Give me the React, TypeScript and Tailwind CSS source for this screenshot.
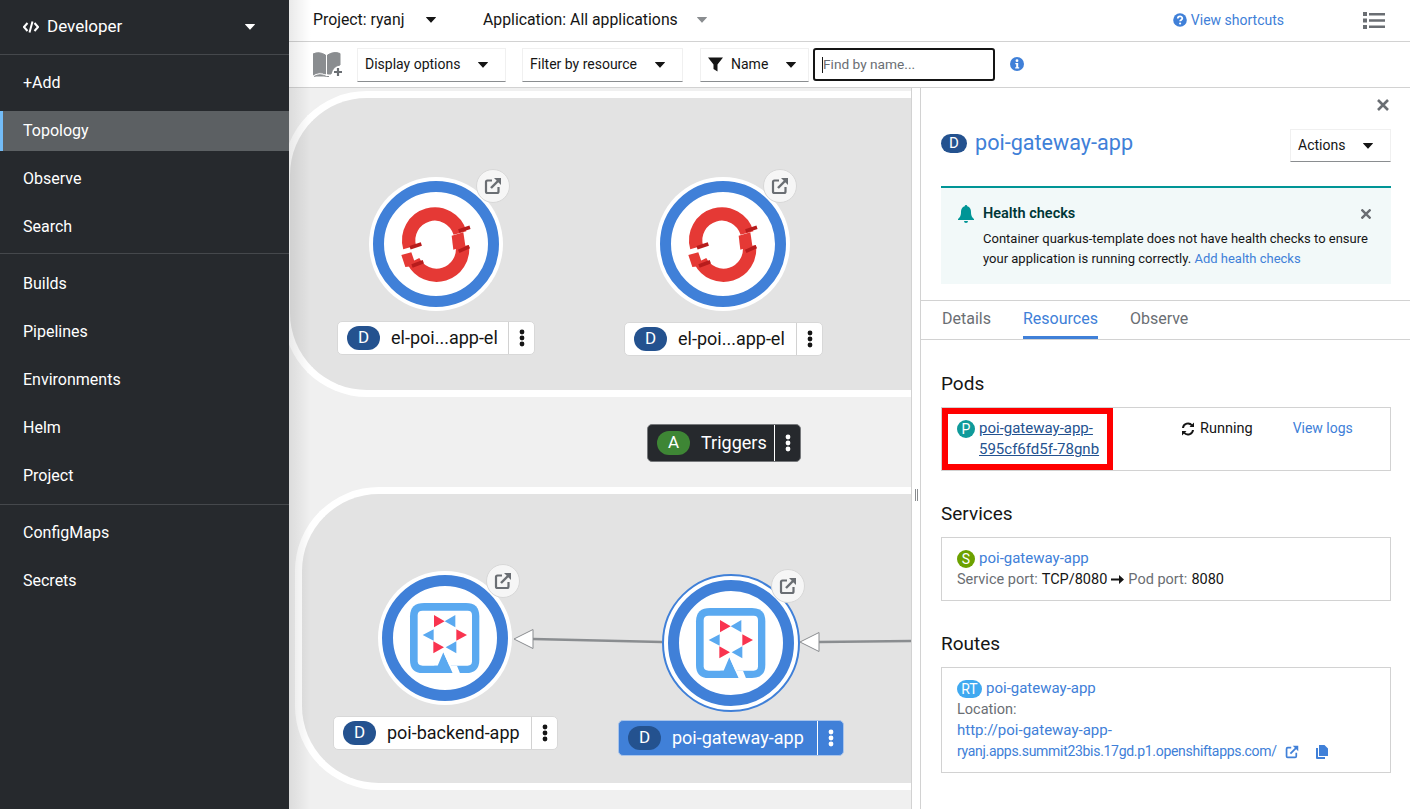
function Caret({ className = 'text-[#151515]' }: { className?: string }) {
  return (
    <svg className={className} width="10" height="6" viewBox="0 0 10 6">
      <path d="M0.3 0h9.4a.3.3 0 0 1 .2.5L5.3 5.6a.4.4 0 0 1-.6 0L.1.5A.3.3 0 0 1 .3 0z" fill="currentColor" />
    </svg>
  )
}

function ExternalIcon({ className, size = 18 }: { className?: string; size?: number }) {
  return (
    <svg className={className} width={size} height={size} viewBox="0 0 18 18" fill="none" stroke="currentColor">
      <path d="M8 3.5H3.5a1.5 1.5 0 0 0-1.5 1.5v9.5A1.5 1.5 0 0 0 3.5 16H13a1.5 1.5 0 0 0 1.5-1.5V10" strokeWidth="2.2" />
      <path d="M7 11L15 3" strokeWidth="2.4" />
      <path d="M10 1h7v7z" fill="currentColor" stroke="none" />
    </svg>
  )
}

function Kebab() {
  return (
    <svg width="6" height="18" viewBox="0 0 6 18" fill="currentColor">
      <circle cx="3" cy="3" r="2.4" />
      <circle cx="3" cy="9" r="2.4" />
      <circle cx="3" cy="15" r="2.4" />
    </svg>
  )
}

function Decorator({ x, y }: { x: number; y: number }) {
  return (
    <div
      className="absolute flex h-[34px] w-[34px] items-center justify-center rounded-full border border-[#d8d8d8] bg-[#f6f6f6] text-[#6a6e73]"
      style={{ left: x - 17, top: y - 17 }}
    >
      <ExternalIcon />
    </div>
  )
}

function OpenshiftLogo() {
  return (
    <svg className="absolute inset-0" width="134" height="134" viewBox="-201 -201 402 402">
      <g transform="translate(0 3)" fill="none">
        <path d="M-79 7A78 78 0 0 1 72 -36" stroke="#e53935" strokeWidth="40" />
        <path d="M79 3A78 78 0 0 1 -68 48" stroke="#e53935" strokeWidth="40" />
        <path d="M-104 30L-74 22L-60 62L-92 66z" fill="#e53935" />
        <path d="M47 -28L82 -38L88 2L52 14z" fill="#e53935" />
        <path d="M-78 8L-44 -3M68 -42L102 -53M68 19L100 5M-72 63L-38 50" stroke="#b71c1c" strokeWidth="11" />
      </g>
    </svg>
  )
}

function QuarkusLogo() {
  return (
    <svg className="absolute inset-0" width="134" height="134" viewBox="-201 -201 402 402">
      <g transform="translate(-377 -262)">
        <path
          d="M315 157H440Q480 157 480 197V327Q480 367 440 367H310Q272 367 272 327V197Q272 157 315 157z"
          fill="#5aa9f0"
        />
        <path d="M310 180H445Q458 180 458 193V332Q458 345 445 345H310Q295 345 295 332V193Q295 180 310 180z" fill="#fff" />
        <path d="M372 305L355 345H345V367H400z" fill="#5aa9f0" />
        <path d="M372 305L400 368H422L413 345H395L380 305z" fill="#fff" />
        <path d="M344 193V230L376 212zM342 272V308L374 290zM443 253L411 236V270z" fill="#f9344f" />
        <path d="M408 193V230L376 212zM310 253L343 236V270zM411 272V308L379 290z" fill="#5aa9f0" />
      </g>
    </svg>
  )
}

function NodeCircle({ cx, cy, selected, logo }: { cx: number; cy: number; selected?: boolean; logo: 'os' | 'q' }) {
  return (
    <div className="absolute h-[134px] w-[134px]" style={{ left: cx - 67, top: cy - 67 }}>
      {selected ? (
        <div className="absolute -inset-[2px] rounded-full border-2 border-[#4080d8] bg-white" />
      ) : (
        <div className="absolute inset-0 rounded-full bg-white" />
      )}
      <div className="absolute inset-[4px] rounded-full border-[11px] border-[#4080d8] bg-white" />
      {logo === 'os' ? <OpenshiftLogo /> : <QuarkusLogo />}
    </div>
  )
}

function NodeLabel({
  x,
  y,
  w,
  h = 34,
  text,
  badge = 'D',
  variant = 'light',
}: {
  x: number
  y: number
  w: number
  h?: number
  text: string
  badge?: string
  variant?: 'light' | 'blue' | 'dark'
}) {
  const shell =
    variant === 'blue'
      ? 'bg-[#4080d8] text-white border-[#a9c4ea]'
      : variant === 'dark'
        ? 'bg-[#26292d] text-white border-[#77797c]'
        : 'bg-white text-[#151515] border-[#d8d8d8]'
  const divider = variant === 'light' ? 'border-[#d2d2d2]' : 'border-white'
  const badgeBg = badge === 'A' ? 'bg-[#3e8635]' : 'bg-[#24528f]'
  return (
    <div className={`absolute flex items-stretch rounded-[5px] border ${shell}`} style={{ left: x, top: y, width: w, height: h }}>
      <div className="flex min-w-0 flex-1 items-center pl-[9px]">
        <span className={`flex h-[24px] w-[33px] shrink-0 items-center justify-center rounded-full text-[17px] text-white ${badgeBg}`}>{badge}</span>
        <span className="mb-[2px] ml-[11px] whitespace-nowrap text-[18px]">{text}</span>
      </div>
      <div className={`flex w-[26px] shrink-0 items-center justify-center border-l ${divider}`}>
        <Kebab />
      </div>
    </div>
  )
}

function Group({ x, y, h, w }: { x: number; y: number; h: number; w: number }) {
  return (
    <div
      className="absolute rounded-l-[84px] border-y-[7px] border-l-[7px] border-white bg-[#e3e3e3]"
      style={{ left: x, top: y, height: h, width: w }}
    />
  )
}

// page coordinates, the arrow head sits on the (x1, y1) end
function Edge({ x1, y1, x2, y2 }: { x1: number; y1: number; x2: number; y2: number }) {
  const ax = x1 - 289
  const ay = y1 - 87
  return (
    <svg className="absolute left-0 top-0" width="623" height="722">
      <line x1={ax + 19} y1={ay} x2={x2 - 289} y2={y2 - 87} stroke="#8a8d90" strokeWidth="2.5" />
      <path d={`M${ax} ${ay}L${ax + 19} ${ay - 9.5}V${ay + 9.5}z`} fill="#fff" stroke="#8a8d90" strokeWidth="1" />
    </svg>
  )
}

function Canvas() {
  return (
    <div className="relative h-full w-[622px] shrink-0 overflow-hidden bg-[#f0f0f0]">
      <Group x={-6} y={3} h={306} w={640} />
      <Group x={6} y={399} h={303} w={640} />
      <Edge x1={514} y1={638} x2={662} y2={641} />
      <Edge x1={800} y1={641} x2={911} y2={640} />
      <NodeCircle cx={147} cy={156} logo="os" />
      <Decorator x={204} y={98} />
      <NodeLabel x={48} y={233} w={198} text="el-poi...app-el" />
      <NodeCircle cx={434} cy={156} logo="os" />
      <Decorator x={491} y={98} />
      <NodeLabel x={335} y={234} w={199} text="el-poi...app-el" />
      <NodeLabel x={358} y={336} w={154} h={38} text="Triggers" badge="A" variant="dark" />
      <NodeCircle cx={156} cy={550} logo="q" />
      <Decorator x={214} y={493} />
      <NodeLabel x={44} y={628} w={225} text="poi-backend-app" />
      <NodeCircle cx={442} cy={555} logo="q" selected />
      <Decorator x={499} y={498} />
      <NodeLabel x={329} y={632} w={226} h={36} text="poi-gateway-app" variant="blue" />
    </div>
  )
}

const navGroups = [
  ['+Add', 'Topology', 'Observe', 'Search'],
  ['Builds', 'Pipelines', 'Environments', 'Helm', 'Project'],
  ['ConfigMaps', 'Secrets'],
]

function Sidebar() {
  return (
    <aside className="z-10 flex h-full w-[289px] shrink-0 flex-col bg-[#26292d] text-white">
      <div className="flex h-[55px] shrink-0 items-center justify-between border-b border-[#45484c] pl-[23px] pr-[34px]">
        <div className="flex items-center gap-[8px] text-[17px]">
          <svg width="16" height="12" viewBox="0 0 16 12" fill="none" stroke="currentColor" strokeWidth="2">
            <path d="M4.5 2L1 6l3.5 4M11.500 2L15 6l-3.500 4M9.500 0.500L6.500 11.500" />
          </svg>
          Developer
        </div>
        <Caret className="text-white" />
      </div>
      {navGroups.map((group, i) => (
        <div
          key={i}
          className={`flex flex-col gap-[8px] ${i === 0 ? 'py-[7px]' : i === 1 ? 'py-[9px]' : 'pt-[7px]'} ${i < 2 ? 'border-b border-[#45484c]' : ''}`}
        >
          {group.map(item => (
            <div
              key={item}
              className={
                item === 'Topology'
                  ? 'relative top-px flex h-[40px] items-center border-l-[3px] border-[#73bcf7] bg-[#5c6063] pl-[20px] text-[16px]'
                  : 'flex h-[40px] items-center pl-[23px] pt-[2px] text-[16px]'
              }
            >
              {item}
            </div>
          ))}
        </div>
      ))}
    </aside>
  )
}

function TopBar() {
  return (
    <div className="flex h-[42px] shrink-0 items-center border-b border-[#d2d2d2] pb-[1px] pl-[24px] pr-[25px] text-[15.8px] text-[#151515]">
      <span className="w-[113px]">Project: ryanj</span>
      <Caret className="text-[#151515]" />
      <span className="ml-[47px] w-[214px]">Application: All applications</span>
      <Caret className="text-[#8a8d90]" />
      <div className="ml-auto flex items-center gap-[4px] text-[14px] text-[#4080d8]">
        <svg width="14" height="14" viewBox="0 0 14 14">
          <circle cx="7" cy="7" r="6.800" fill="#4080d8" />
          <path d="M4.800 5.500C4.800 2.800 9.300 2.800 9.300 5.300C9.300 6.900 7.100 6.900 7.100 8.300" fill="none" stroke="#fff" strokeWidth="1.800" />
          <circle cx="7.100" cy="10.500" r="1.100" fill="#fff" />
        </svg>
        View shortcuts
      </div>
      <svg className="ml-[79px]" width="22" height="17" viewBox="0 0 22 17" fill="#6a6e73">
        <path d="M0 0h4v4H0zM0 6.500h4v4H0zM0 13h4v4H0zM6 1h16v2.500H6zM6 7.300h16v2.500H6zM6 13.600h16v2.500H6z" />
      </svg>
    </div>
  )
}

function Select({ label, w }: { label: string; w: number }) {
  return (
    <div
      className="flex h-[34px] items-center justify-between border border-[#f0f0f0] border-b-[#8a8d90] pl-[7px] pr-[17px] text-[14px] text-[#151515]"
      style={{ width: w }}
    >
      {label}
      <Caret />
    </div>
  )
}

function ToolBar() {
  return (
    <div className="flex h-[46px] shrink-0 items-center border-b border-[#d2d2d2] pl-[24px] text-[#151515]">
      <svg width="29" height="26" viewBox="0 0 29 26">
        <path d="M0 2Q6 -1 12.500 3V22Q6 19 0 23zM14.500 3Q21 -1 27 1.500V13Q20 14 18 22L14.500 22zM1 24.500Q7 21 13.500 24.500L16 24.500" fill="#8a8d90" stroke="#8a8d90" strokeWidth="1" />
        <path d="M21 20h8M25 16v8" stroke="#6a6e73" strokeWidth="2.200" />
      </svg>
      <div className="ml-[15px]"><Select label="Display options" w={149} /></div>
      <div className="ml-[16px]"><Select label="Filter by resource" w={161} /></div>
      <div className="ml-[17px] flex h-[34px] w-[109px] items-center border border-[#f0f0f0] border-b-[#8a8d90] pl-[7px] text-[14px]">
        <svg width="15" height="15" viewBox="0 0 15 15" fill="#151515">
          <path d="M0 .500h15L9.500 7.500V14.500L5.500 12V7.500z" />
        </svg>
        <span className="ml-[8px]">Name</span>
        <Caret className="ml-[18px] text-[#151515]" />
      </div>
      <div className="ml-[4px] flex h-[33px] w-[182px] items-center rounded-[3px] border-2 border-[#151515] pl-[7px] text-[13.7px] text-[#6a6e73]">
        <span className="h-[16px] w-px bg-[#151515]" />Find by name...
      </div>
      <svg className="-mt-[2px] ml-[15px]" width="14" height="14" viewBox="0 0 14 14">
        <circle cx="7" cy="7" r="7" fill="#4080d8" />
        <circle cx="7" cy="3.700" r="1.400" fill="#fff" />
        <path d="M5.300 6h2.900v4.200h1v1.200H5.200v-1.200h1V7.200h-.9z" fill="#fff" />
      </svg>
    </div>
  )
}

function Resource({ title, children, h, mt }: { title: string; children: React.ReactNode; h: number; mt: number }) {
  return (
    <section style={{ marginTop: mt }}>
      <h2 className="text-[19px] leading-[24px] text-[#151515]">{title}</h2>
      <div className="mt-[11px] border border-[#d2d2d2] text-[15px] leading-[21px]" style={{ height: h }}>
        {children}
      </div>
    </section>
  )
}

function Dot({ label, color, w = 'w-[18px]' }: { label: string; color: string; w?: string }) {
  return <span className={`mr-[4px] flex h-[18px] shrink-0 items-center justify-center rounded-full text-[14px] leading-none text-white ${w} ${color}`}>{label}</span>
}

function SidePanel() {
  return (
    <div className="flex min-w-0 flex-1 flex-col border-l border-[#d2d2d2] bg-white">
      <div className="flex justify-end pr-[21px] pt-[11px] text-[#6a6e73]">
        <svg width="12" height="12" viewBox="0 0 12 12" stroke="currentColor" strokeWidth="2.600">
          <path d="M1 1l10 10M11 1L1 11" />
        </svg>
      </div>
      <div className="mt-[18px] flex items-start justify-between pl-[20px] pr-[19px]">
        <div className="mt-[1px] flex items-center text-[21.6px] leading-[26px] text-[#4080d8]">
          <span className="mr-[8px] flex h-[19px] w-[26px] items-center justify-center rounded-full bg-[#24528f] text-[15px] text-white">D</span>
          poi-gateway-app
        </div>
        <div className="flex h-[33px] w-[101px] items-center justify-between border border-[#f0f0f0] border-b-[#8a8d90] pl-[7px] pr-[17px] text-[14px] text-[#151515]">
          Actions
          <Caret />
        </div>
      </div>
      <div className="ml-[20px] mr-[19px] mt-[24px] h-[98px] border-t-2 border-[#009596] bg-[#f2f9f9] pl-[17px] pr-[10px] pt-[17px]">
        <div className="flex items-center pr-[10px]">
          <svg width="16" height="18" viewBox="0 0 16 18" fill="#009596">
            <path d="M8 0a1.300 1.300 0 0 1 1.300 1.300C12 2 13 4.500 13 7c0 4 1.300 5.500 3 7v1H0v-1c1.700-1.500 3-3 3-7 0-2.500 1-5 3.700-5.700A1.300 1.300 0 0 1 8 0zM6 16h4a2 2 0 0 1-4 0z" />
          </svg>
          <span className="ml-[9px] text-[14.5px] font-semibold leading-[18px] text-[#003737]">Health checks</span>
          <svg className="ml-auto" width="10" height="10" viewBox="0 0 10 10" stroke="#6a6e73" strokeWidth="2.400">
            <path d="M0.500 0.500l9 9M9.500 0.500l-9 9" />
          </svg>
        </div>
        <p className="ml-[25px] mt-[6px] text-[13px] leading-[20px] text-[#151515]">
          Container quarkus-template does not have health checks to ensure your application is running correctly. <span className="text-[#4080d8]">Add health checks</span>
        </p>
      </div>
      <div className="mt-[16px] flex h-[40px] items-stretch gap-[32px] border-y border-[#d2d2d2] pl-[21px] text-[16px]">
        <div className="flex items-center pb-[2px] text-[#6a6e73]">Details</div>
        <div className="flex items-center border-b-[3px] border-[#4080d8] pt-[1px] text-[#4080d8]">Resources</div>
        <div className="flex items-center pb-[2px] text-[#6a6e73]">Observe</div>
      </div>
      <div className="pl-[20px] pr-[19px]">
        <Resource title="Pods" h={64} mt={32}>
          <div className="relative flex h-full pl-[15px] pt-[10px]">
            <div className="absolute inset-y-0 left-0 w-[171px] border-[6px] border-[#ff0000]" />
            <div className="w-[224px] text-[#24528f]">
              <div className="flex h-[21px] items-center">
                <Dot label="P" color="bg-[#0f9a9a]" />
                <span className="underline">poi-gateway-app-</span>
              </div>
              <div className="ml-[22px] underline">595cf6fd5f-78gnb</div>
            </div>
            <div className="flex h-[21px] items-center gap-[5px] text-[14.5px] text-[#151515]">
              <svg width="14" height="14" viewBox="0 0 14 14" fill="none" stroke="#151515" strokeWidth="2">
                <path d="M2 6A5 5 0 0 1 11 3.500M12 8A5 5 0 0 1 3 10.500" />
                <path d="M13 .500V5H8.500zM1 13.500V9h4.500z" fill="#151515" stroke="none" />
              </svg>
              Running
            </div>
            <div className="ml-[40px] text-[14px] text-[#4080d8]">View logs</div>
          </div>
        </Resource>
        <Resource title="Services" h={64} mt={31}>
          <div className="pl-[15px] pt-[10px]">
            <div className="flex h-[21px] items-center text-[#4080d8]"><Dot label="S" color="bg-[#6ca100]" />poi-gateway-app</div>
            <div className="flex items-center text-[14.5px] text-[#6a6e73]">
              <span>Service port:</span>
              <span className="ml-[4px] text-[#151515]">TCP/8080</span>
              <svg className="mx-[4px]" width="13" height="9" viewBox="0 0 13 9" fill="#151515">
                <path d="M0 3.500h8V0l5 4.500L8 9V5.500H0z" />
              </svg>
              <span>Pod port:</span>
              <span className="ml-[4px] text-[#151515]">8080</span>
            </div>
          </div>
        </Resource>
        <Resource title="Routes" h={106} mt={31}>
          <div className="pl-[15px] pt-[10px]">
            <div className="flex h-[21px] items-center text-[#4080d8]">
              <Dot label="RT" color="bg-[#40a9f0]" w="w-[25px]" />
              poi-gateway-app
            </div>
            <div className="text-[14.5px] text-[#6a6e73]">Location:</div>
            <div className="text-[15px] text-[#4080d8]">http://poi-gateway-app-</div>
            <div className="flex items-center text-[14px] tracking-[-0.3px] text-[#4080d8]">
              ryanj.apps.summit23bis.17gd.p1.openshiftapps.com/
              <ExternalIcon className="ml-[8px]" size={14} />
              <svg className="ml-[17px]" width="12" height="14" viewBox="0 0 12 14" fill="currentColor">
                <path d="M3 0h5.500L12 3.500V11H3zM0 3h2v9h7v2H1a1 1 0 0 1-1-1z" />
              </svg>
            </div>
          </div>
        </Resource>
      </div>
    </div>
  )
}

export default function App() {
  return (
    <div className="flex h-[809px] w-[1410px] overflow-hidden bg-white" style={{ fontFamily: 'Roboto, sans-serif' }}>
      <Sidebar />
      <main className="relative flex min-w-0 flex-1 flex-col">
        <TopBar />
        <ToolBar />
        <div className="flex min-h-0 flex-1">
          <Canvas />
          <div className="relative w-[9px] shrink-0 border-l border-[#d2d2d2] bg-white">
            <div className="absolute left-[3px] top-[401px] h-[12px] w-[3px] border-x border-[#8a8d90]" />
          </div>
          <SidePanel />
        </div>
        <div className="pointer-events-none absolute inset-y-0 left-0 w-[22px] bg-gradient-to-r from-[#00000016] to-transparent" />
      </main>
    </div>
  )
}
